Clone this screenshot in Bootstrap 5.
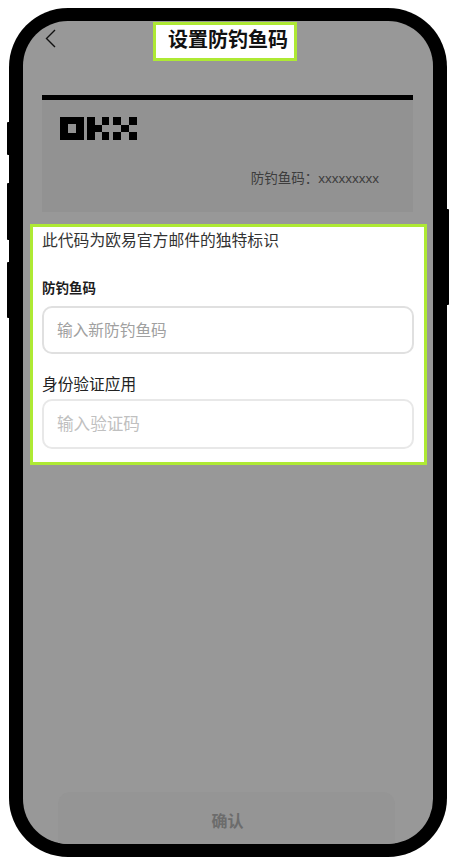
<!DOCTYPE html>
<html lang="zh-CN">
<head>
<meta charset="utf-8">
<title>设置防钓鱼码</title>
<link rel="stylesheet" href="https://cdn.jsdelivr.net/npm/bootstrap@5.3.0/dist/css/bootstrap.min.css">
<style>
html,body{height:864px;overflow:hidden;background:#fff}
body{font-family:"Liberation Sans","Noto Sans CJK SC",sans-serif;color:#222}
.stage{padding:8px 7px 7px;height:864px}
.side-keys{width:2px;flex:none}
.key{background:#000;width:2px;border-radius:1px 0 0 1px}
.key-a{height:33px;margin-top:114px}
.key-b{height:57px;margin-top:28px}
.key-c{height:56px;margin-top:22px}
.key-d{height:96px;margin-top:201px;border-radius:0 1px 1px 0}
.phone{width:438px;height:849px;flex:none;background:#000;border-radius:59px;padding:13px 14px}
.screen{width:410px;height:823px;background:#989898;border-radius:45px;overflow:hidden}
.top-row{height:40px;padding:1px 0 0 22px}
.chevron{width:11px;height:19px;margin-top:7px;flex:none}
.title-box{width:144px;height:39px;margin-left:97px;background:#fff;border:3px solid #aee934;font-size:20px;font-weight:700;color:#111;line-height:30px;padding-left:12px;white-space:nowrap}
.sample{margin:34px 20px 0 19px;height:117px;background:#929292;border-top:5px solid #000;flex:none}
.brand{display:block;margin:17px 0 0 18px}
.code-line{font-size:13.5px;color:#3d3d3d;margin:27px 34px 0 0;line-height:20px}
.colon{font-family:"Noto Sans CJK TC",sans-serif}
.panel{margin:12px 6px 0 7px;height:241px;background:#fff;border:3px solid #aee934;padding:0 10px 0 9px;flex:none}
.intro{font-size:15.8px;line-height:22px;color:#333;margin:3px 0 0}
.label-a{font-size:13.5px;font-weight:700;color:#1c1c1c;line-height:18px;margin:28px 0 8px}
.label-b{font-size:15.7px;color:#222;line-height:20px;margin:21px 0 4px}
.form-control.field{height:48px;border:2px solid #e0e0e0;border-radius:10px;padding:2px 13px 0;font-size:15.7px;box-shadow:none}
.form-control.field::placeholder{color:#a0a0a0}
.form-control.field-b{height:50px;border-color:#e8e8e8}
.form-control.field-b::placeholder{color:#c0c0c0;font-size:16.6px}
.confirm{margin:auto 38px 0 35px;height:52px;background:#959595;border:0;color:#6c6c6c;font-size:16px;font-weight:700;line-height:56px;text-align:center;padding:2px 0 0 2px;flex:none;border-radius:12px 12px 0 0}
.confirm:disabled{background:#959595;color:#6c6c6c;opacity:1}
</style>
</head>
<body class="m-0">
<div class="stage d-flex">
  <div class="side-keys d-flex flex-column">
    <div class="key key-a"></div>
    <div class="key key-b"></div>
    <div class="key key-c"></div>
  </div>
  <div class="phone">
    <div class="screen d-flex flex-column">
      <div class="top-row d-flex align-items-start">
        <svg class="chevron" viewBox="0 0 11 19" fill="none" stroke="#111" stroke-width="1.4" aria-hidden="true"><path d="M10 1 1.5 9.5 10 18"/></svg>
        <div class="title-box">设置防钓鱼码</div>
      </div>
      <div class="sample">
        <svg class="brand" width="77" height="23" viewBox="0 0 77 23" aria-hidden="true"><path fill="#000" fill-rule="evenodd" d="M0 0H24V23H0ZM8 7V16H16V7Z"/><path fill="#000" d="M27 0h8v23h-8zM35 8h7v7h-7zM42 0h7v8h-7zM42 15h7v8h-7zM53 0h8v8h-8zM53 15h8v8h-8zM61 8h8v7h-8zM69 0h8v8h-8zM69 15h8v8h-8z"/></svg>
        <p class="code-line text-end">防钓鱼码<span class="colon">：</span>xxxxxxxxx</p>
      </div>
      <div class="panel">
        <p class="intro">此代码为欧易官方邮件的独特标识</p>
        <p class="label-a">防钓鱼码</p>
        <input class="form-control field" type="text" placeholder="输入新防钓鱼码" aria-label="防钓鱼码">
        <p class="label-b">身份验证应用</p>
        <input class="form-control field field-b" type="text" placeholder="输入验证码" aria-label="身份验证应用">
      </div>
      <button class="btn confirm" type="button" disabled>确认</button>
    </div>
  </div>
  <div class="side-keys d-flex flex-column">
    <div class="key key-d"></div>
  </div>
</div>
<script src="https://cdn.jsdelivr.net/npm/bootstrap@5.3.0/dist/js/bootstrap.bundle.min.js"></script>
</body>
</html>
